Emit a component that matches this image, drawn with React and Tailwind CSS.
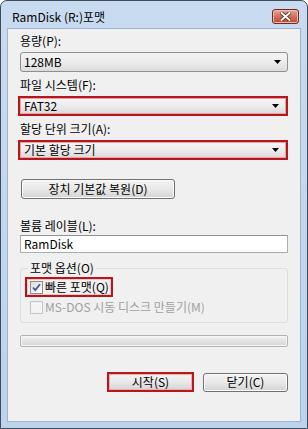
import React from 'react'

const font = { fontFamily: '"Noto Sans CJK KR", "Liberation Sans", sans-serif' }

function Arrow() {
  return (
    <svg width="7" height="4" viewBox="0 0 7 4" className="shrink-0">
      <path d="M0 0h7L3.5 4z" fill="#000" />
    </svg>
  )
}

function Combo({ value, hot }) {
  const inner = (
    <div
      className={
        'flex h-full items-center justify-between pl-[3px] pr-[6px] bg-gradient-to-b from-[#f4f4f4] via-[#ececec] to-[#dcdcdc] ' +
        (hot ? 'border border-[#e7a3a3]' : 'rounded-[3px] border border-[#8e8f8f]')
      }
    >
      <span className="text-[12px] leading-[16px] text-black">{value}</span>
      <Arrow />
    </div>
  )
  if (hot) {
    return <div className="mt-[3px] -ml-[2px] h-[20px] border-2 border-[#b8161d]">{inner}</div>
  }
  return <div className="mt-[3px] h-[20px]">{inner}</div>
}

function Label({ children, className = '' }) {
  return <div className={'h-[16px] text-[12px] leading-[16px] text-black ' + className}>{children}</div>
}

function Button({ children, hot, className = '' }) {
  return (
    <button
      className={
        'flex items-center justify-center text-[12px] leading-[16px] text-black bg-gradient-to-b from-[#f3f3f3] via-[#e9e9e9] to-[#d3d3d3] ' +
        (hot ? 'border-2 border-[#b8161d] shadow-[inset_0_0_0_1px_#e9b0b0] ' : 'rounded-[3px] border border-[#707070] shadow-[inset_0_0_0_1px_#fcfcfc] ') +
        className
      }
    >
      {children}
    </button>
  )
}

function Check({ checked, disabled }) {
  return (
    <div
      className={
        'flex h-[13px] w-[13px] shrink-0 items-center justify-center border ' +
        (disabled ? 'border-[#c4c4c4] bg-[#f4f4f4]' : 'border-[#8f8f8f] bg-gradient-to-br from-[#dcdcdc] to-[#ffffff]')
      }
    >
      {checked && (
        <svg width="9" height="9" viewBox="0 0 9 9">
          <path d="M1 4.5l2.3 2.5L8 1.2" fill="none" stroke="#3d5a95" strokeWidth="1.8" />
        </svg>
      )}
    </div>
  )
}

export default function App() {
  return (
    <div className="w-[308px] h-[429px] bg-white" style={font}>
      <div className="flex h-full flex-col rounded-t-[7px] border border-[#3f4c5c] bg-gradient-to-b from-[#c9dbf0] to-[#bcd2ed] px-[6px] pb-[6px]">
        {/* Title bar */}
        <div className="flex h-[27px] shrink-0 items-center justify-between pl-[5px] pt-[4px]">
          <span className="text-[12px] leading-[16px] text-black">RamDisk (R:)포맷</span>
          <div className="mr-[2px] flex h-[15px] w-[27px] items-center justify-center rounded-[3px] border border-[#6e2a22] bg-gradient-to-b from-[#e9a795] via-[#d0705c] to-[#c0442c] shadow-[inset_0_0_0_1px_#efbcae]">
            <svg width="11" height="9" viewBox="0 0 11 9">
              <path d="M1.5 1l8 7M9.5 1l-8 7" stroke="#5a2018" strokeWidth="3.6" strokeLinecap="square" />
              <path d="M1.5 1l8 7M9.5 1l-8 7" stroke="#ffffff" strokeWidth="2" strokeLinecap="square" />
            </svg>
          </div>
        </div>

        {/* Client area */}
        <div className="flex flex-1 flex-col border border-[#9fb3cc] bg-[#f0f0f0] px-[12px] pt-[4px]">
          <Label>용량(P):</Label>
          <Combo value="128MB" />

          <Label className="mt-[5px]">파일 시스템(F):</Label>
          <Combo value="FAT32" hot />

          <Label className="mt-[5px]">할당 단위 크기(A):</Label>
          <Combo value="기본 할당 크기" hot />

          <Button className="mt-[19px] ml-[1px] h-[20px] w-[154px]">장치 기본값 복원(D)</Button>

          <Label className="mt-[19px]">볼륨 레이블(L):</Label>
          <div className="mt-[1px] flex h-[18px] items-center border border-[#abadb3] border-t-[#8e9298] bg-white pl-[3px] text-[12px] leading-[16px] text-black">
            RamDisk
          </div>

          <fieldset className="mt-[7px] h-[63px] rounded-[3px] border border-[#d5dfe5] px-[4px]">
            <legend className="ml-[3px] px-[2px] text-[12px] leading-[16px] text-black">포맷 옵션(O)</legend>
            <div className="flex flex-col items-start">
              <div className="mt-[1px] flex h-[20px] items-center gap-[2px] border-2 border-[#b8161d] pl-[3px] pr-[2px] shadow-[inset_0_0_0_1px_#edc4c4]">
                <Check checked />
                <span className="text-[12px] leading-[16px] text-black">빠른 포맷(Q)</span>
              </div>
              <div className="mt-[2px] flex h-[16px] items-center gap-[2px] pl-[5px]">
                <Check disabled />
                <span className="text-[12px] leading-[16px] text-[#a0a0a0]">MS-DOS 시동 디스크 만들기(M)</span>
              </div>
            </div>
          </fieldset>

          <div className="mt-[12px] h-[12px] rounded-[2px] border border-[#b2b2b2] bg-gradient-to-b from-[#f4f4f4] via-[#e2e2e2] to-[#d6d6d6] shadow-[inset_0_0_0_1px_#f7f7f7]" />

          <div className="mt-[25px] flex items-center justify-end gap-[9px]">
            <Button hot className="h-[20px] w-[87px]">시작(S)</Button>
            <Button className="h-[19px] w-[85px]">닫기(C)</Button>
          </div>
        </div>
      </div>
    </div>
  )
}
